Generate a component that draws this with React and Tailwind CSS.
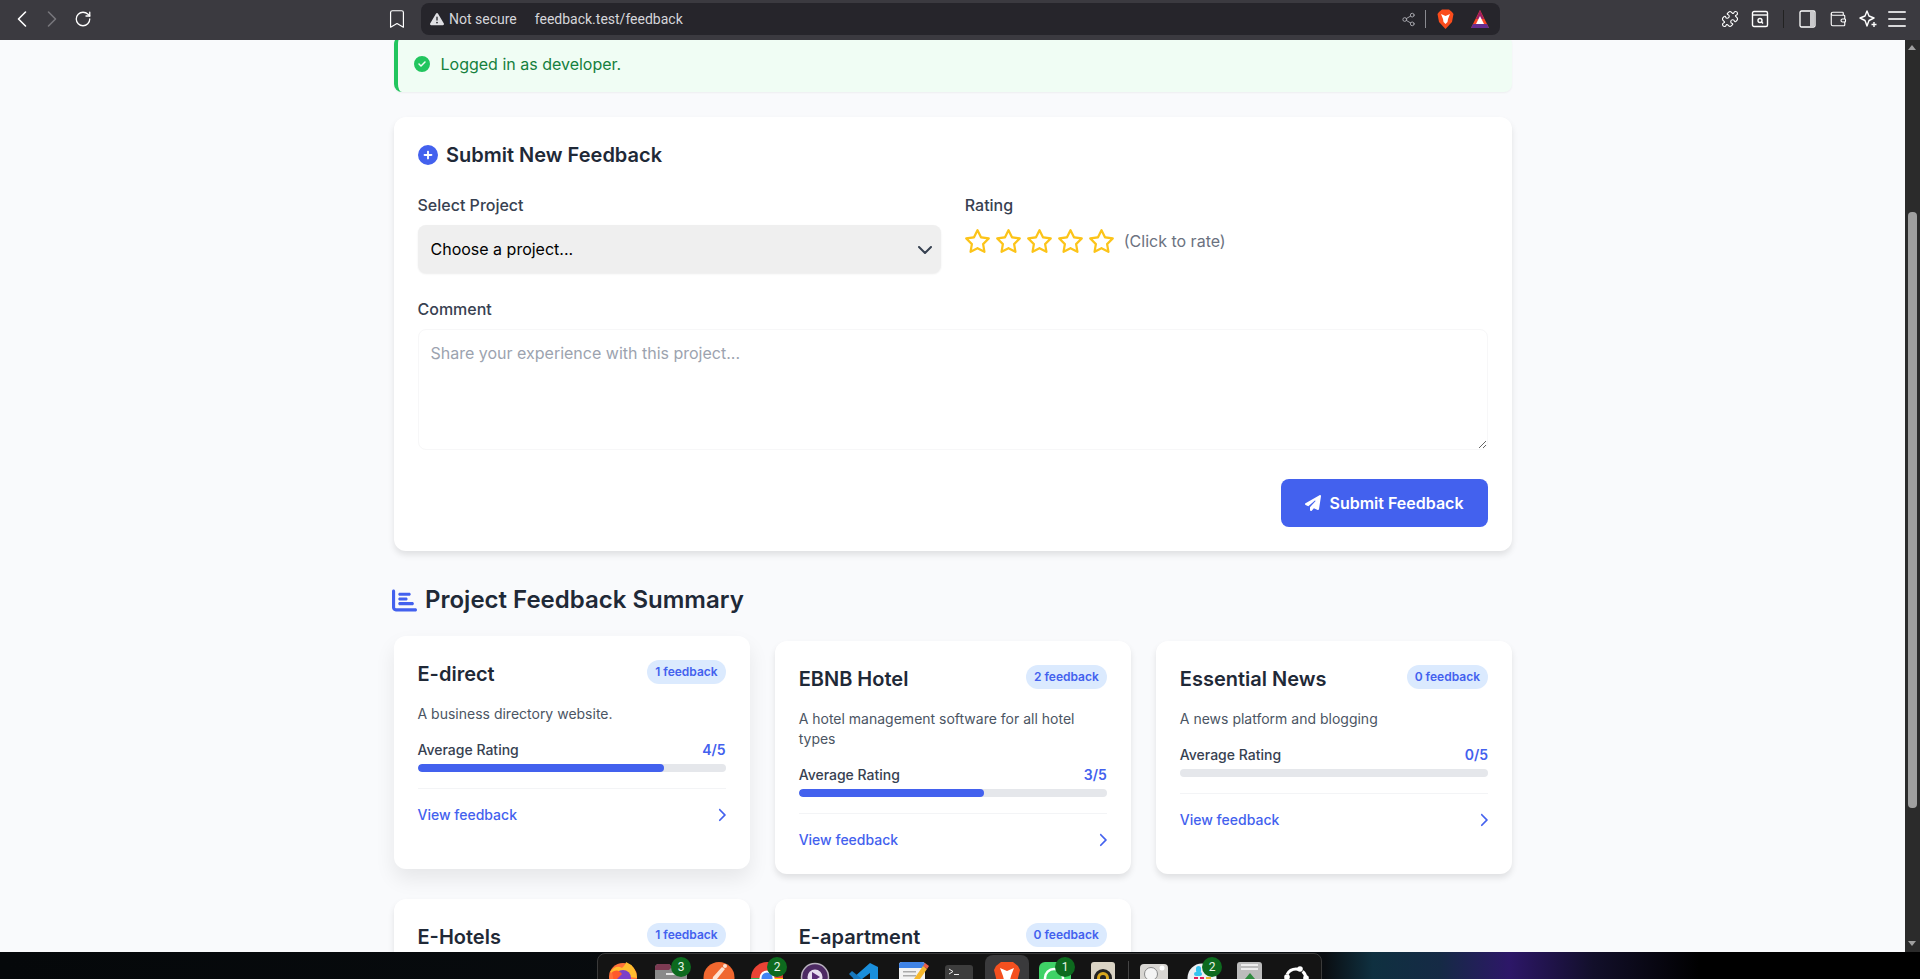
import React from "react";
import { FaChartBar, FaRegStar, FaPaperPlane, FaChevronRight, FaCircleCheck, FaCirclePlus, FaTriangleExclamation } from "react-icons/fa6";
import { ChevronLeft, ChevronRight, RotateCw, Bookmark, Share2, Puzzle, Wallet, Menu } from "lucide-react";

function CardHead({ title, count }) {
  return (
    <div className="flex items-start justify-between mb-4">
      <h3 className="text-xl leading-7 font-semibold text-[#1f2937]">{title}</h3>
      <span className="h-6 rounded-full bg-[#dbeafe] text-[#4361ee] text-xs leading-6 font-semibold px-2">{count} feedback</span>
    </div>
  );
}

function Card({ title, count, desc, rating, pct, hovered }) {
  return (
    <div className={hovered ? "bg-white rounded-xl p-6 flex flex-col -translate-y-[5px] shadow-[0_10px_20px_rgba(0,0,0,0.08)]" : "bg-white rounded-xl p-6 flex flex-col shadow-[0_4px_6px_rgba(0,0,0,0.1)]"}>
      <CardHead title={title} count={count} />
      <p className="text-sm leading-5 text-[#4b5563] mb-4">{desc}</p>
      <div className="flex justify-between text-sm leading-5 mb-1">
        <span className="text-[#374151] font-medium">Average Rating</span>
        <span className="text-[#4361ee] font-semibold">{rating}/5</span>
      </div>
      <div className="h-2 rounded-full bg-[#e5e7eb] overflow-hidden">
        <div className="h-full rounded-full bg-[#4361ee]" style={{ width: pct + "%" }} />
      </div>
      <div className="mt-4 pt-4 border-t border-[#f3f4f6] flex items-center justify-between text-[#4361ee]">
        <span className="text-sm leading-5 font-medium">View feedback</span>
        <FaChevronRight className="w-[9px] h-[14px]" />
      </div>
    </div>
  );
}

function ClippedCard({ title, count }) {
  return (
    <div className="bg-white rounded-xl p-6 h-[120px] shadow-[0_4px_6px_rgba(0,0,0,0.1)]">
      <CardHead title={title} count={count} />
    </div>
  );
}

function Badge({ n, cls }) {
  return <span className={"absolute top-[5px] w-5 h-5 rounded-full bg-[#0d6a1e] text-[#e8f5e8] text-[12px] leading-5 text-center " + cls}>{n}</span>;
}

function Dock() {
  return (
    <div className="h-[27px] shrink-0 overflow-hidden bg-[linear-gradient(90deg,#05080a_0%,#0a0e12_69%,#0f3040_71.5%,#152a45_75%,#2d1768_78.6%,#120f2a_83%,#000_88.5%)] relative font-['Roboto',sans-serif]">
      <div className="ml-[597px] mt-px w-[725px] h-[40px] bg-[#141414] border border-[#3a3a3a] rounded-lg" />
      <svg className="absolute left-0 top-0" width="1920" height="27" viewBox="0 0 1920 27">
        <rect x="985" y="3" width="44" height="40" rx="8" fill="#3a3a3c" />
        <rect x="1128" y="9" width="1" height="20" fill="#444" />
        {/* firefox */}
        <circle cx="623" cy="25" r="14" fill="#ff7139" />
        <path d="M610 20 Q616 12 622 16 Q626 12 626 10 Q636 14 637 26 L622 24 Z" fill="#ffbd2e" />
        <circle cx="623" cy="26" r="8" fill="#7b3fc9" />
        <path d="M612 20 Q618 16 622 22 L614 30 Z" fill="#ff5a2c" />
        {/* files */}
        <path d="M655 16 Q655 12 659 12 L669 12 L672 15 L684 15 Q687 15 687 18 L687 32 L655 32 Z" fill="#8a8a8a" />
        <path d="M655 16 Q655 12 659 12 L669 12 L672 15 L669 18 L655 18 Z" fill="#7c3a52" />
        <rect x="666" y="21" width="11" height="2" fill="#e4e4e4" />
        {/* orange */}
        <circle cx="719" cy="25.5" r="15.5" fill="#f0672f" />
        <path d="M713 25 L722 15 L725 17 L717 27 L712 30 Z" fill="#fde2d2" />
        <circle cx="725" cy="14" r="2" fill="#fde2d2" />
        {/* chrome */}
        <circle cx="767" cy="26" r="16" fill="#ea4335" />
        <path d="M751 26 A16 16 0 0 0 759 40 L767 26 Z" fill="#34a853" />
        <path d="M767 26 L783 26 A16 16 0 0 1 775 40 Z" fill="#fbbc05" />
        <circle cx="767" cy="26" r="7.5" fill="#fff" />
        <circle cx="767" cy="26" r="5.5" fill="#4285f4" />
        {/* player */}
        <circle cx="815" cy="25" r="13.5" fill="#4d2a63" stroke="#b7b0bd" strokeWidth="1.5" />
        <circle cx="815" cy="25" r="7.5" fill="#e8dff0" />
        <path d="M812 20 L820 25 L812 30 Z" fill="#5b2d78" />
        {/* vscode */}
        <path d="M870 11 L878 15 L878 40 L870 44 L870 21 L858 30 L853 26 Z" fill="#1a8fdc" />
        <path d="M849 22 L852 19 L862 27 L858 31 Z" fill="#1778bd" />
        {/* notes */}
        <rect x="899" y="10" width="26" height="24" rx="3" fill="#f2f2f2" />
        <path d="M899 16 V13 Q899 10 902 10 L922 10 Q925 10 925 13 V16 Z" fill="#3f83e6" />
        <rect x="903" y="19" width="13" height="1.5" fill="#aaa" />
        <rect x="903" y="23" width="13" height="1.5" fill="#aaa" />
        <rect x="903" y="27" width="10" height="1.5" fill="#aaa" />
        <path d="M914 27 L923 14 L927 17 L918 30 Z" fill="#f5b82e" />
        <path d="M923 14 L925 11 L929 14 L927 17 Z" fill="#e8604c" />
        {/* terminal */}
        <rect x="945" y="13" width="28" height="20" rx="3" fill="#3d3d3d" />
        <path d="M949 17 L953 19.5 L949 22" stroke="#eee" strokeWidth="1" fill="none" />
        <rect x="954" y="22" width="5" height="1" fill="#eee" />
        {/* brave */}
        <path d="M996 14 L1001 10 L1013 10 L1018 14 L1020 18 L1017 30 L1007 37 L997 30 L994 18 Z" fill="#f4501f" />
        <path d="M1000 16 L1007 19 L1014 16 L1011 24 L1010 28 L1007 30 L1004 28 L1003 24 Z" fill="#fff" />
        {/* whatsapp */}
        <rect x="1039" y="10" width="32" height="30" rx="6" fill="#3fd267" />
        <circle cx="1054" cy="26" r="9" fill="none" stroke="#fff" strokeWidth="2.5" />
        {/* speaker */}
        <rect x="1091" y="10" width="24" height="28" rx="3" fill="#d9d3c4" />
        <circle cx="1103" cy="26" r="9" fill="#222" />
        <circle cx="1103" cy="26" r="6" fill="#d8a71e" />
        <circle cx="1103" cy="26" r="3" fill="#222" />
        {/* search */}
        <rect x="1140" y="12" width="28" height="26" rx="4" fill="#d8d6d2" />
        <circle cx="1151" cy="22" r="6.5" fill="#f4f4f4" stroke="#888" />
        <circle cx="1162" cy="16" r="2.5" fill="#fff" />
        {/* slack */}
        <circle cx="1202" cy="26" r="14.5" fill="#eceff2" />
        <rect x="1196" y="14" width="5" height="7" rx="2.5" fill="#36c5f0" />
        <rect x="1194" y="20" width="8" height="4" rx="2" fill="#36c5f0" />
        <rect x="1194" y="25" width="4" height="2" fill="#e01e5a" />
        <rect x="1200" y="25" width="4" height="2" fill="#e01e5a" />
        <rect x="1206" y="25" width="5" height="2" fill="#ecb22e" />
        {/* trash */}
        <rect x="1237" y="10" width="25" height="28" rx="3" fill="#bcbcbc" />
        <rect x="1241" y="12" width="17" height="2" fill="#eee" />
        <rect x="1241" y="16" width="17" height="2" fill="#eee" />
        <path d="M1245 27 L1250 21 L1255 27 Z" fill="#2e8b3f" />
        {/* ubuntu */}
        <circle cx="1296" cy="27" r="10" fill="none" stroke="#fff" strokeWidth="3" strokeDasharray="14 4" />
        <circle cx="1300" cy="17" r="2.8" fill="#fff" />
        <circle cx="1287" cy="25" r="2.8" fill="#fff" />
        <circle cx="1306" cy="26" r="2.8" fill="#fff" />
      </svg>
      <Badge n="3" cls="left-[671px]" />
      <Badge n="2" cls="left-[767px]" />
      <Badge n="1" cls="left-[1055px]" />
      <Badge n="2" cls="left-[1202px]" />
    </div>
  );
}

function ChromeBar() {
  return (
    <div className="h-10 shrink-0 bg-[#3b3a40] flex items-center pb-[2px] pl-2 text-[#e6e6e8]">
      <ChevronLeft className="w-7 h-7 shrink-0 text-white" strokeWidth={1.4} />
      <ChevronRight className="w-7 h-7 shrink-0 ml-[2px] text-[#77767b]" strokeWidth={1.4} />
      <RotateCw className="w-[18px] h-[18px] shrink-0 ml-2 text-white" strokeWidth={1.75} />
      <Bookmark className="w-[22px] h-[22px] shrink-0 ml-[294px] text-white" strokeWidth={1.3} />
      <div className="ml-[13px] w-[1079px] shrink-0 h-8 rounded-lg bg-[#26252b] flex items-center pl-[9px] pr-[11px] font-['Roboto',sans-serif] text-[14px] text-[#d5d5da]">
        <FaTriangleExclamation className="w-[14px] h-[14px] text-[#dfdfe3]" />
        <span className="ml-[5px]">Not secure</span>
        <span className="ml-[18px]">feedback.test/feedback</span>
        <Share2 className="w-[15px] h-[15px] ml-auto text-[#aaaab0]" strokeWidth={1.5} />
        <div className="ml-[9px] w-px h-[18px] bg-[#8a8a90]" />
        <svg className="ml-[11px]" width="17" height="20" viewBox="0 0 17 20">
          <path d="M2 3 L5 0.5 L12 0.5 L15 3 L16.5 5 L15 13 L8.5 20 L2 13 L0.5 5 Z" fill="#fb4c1c" />
          <path d="M4 5 L8.5 7 L13 5 L11 10 L10.5 13 L8.5 15 L6.5 13 L6 10 Z" fill="#fff" />
        </svg>
        <svg className="ml-[17px]" width="18" height="18" viewBox="0 0 18 18">
          <path d="M9 0 L18 18 L0 18 Z" fill="#ff4724" />
          <path d="M9 0 L13 9 L5 9 Z" fill="#9e1f63" />
          <path d="M2 14 L16 14 L18 18 L0 18 Z" fill="#662d91" />
          <path d="M9 6 L13 14 L5 14 Z" fill="#fff" />
        </svg>
      </div>
      <Puzzle className="w-[18px] h-[18px] shrink-0 ml-[221px] text-white" strokeWidth={1.5} />
      <svg className="ml-[12px] shrink-0 text-white" width="18" height="18" viewBox="0 0 18 18" fill="none" stroke="currentColor" strokeWidth="1.4">
        <rect x="1.5" y="1.5" width="15" height="15" rx="1.5" />
        <path d="M1.5 5 H16.5" />
        <circle cx="9" cy="10.5" r="2" />
        <path d="M10.5 12 L12 13.5" />
      </svg>
      <div className="ml-[14px] w-px h-[18px] shrink-0 bg-[#222]" />
      <svg className="ml-[15px] shrink-0" width="17" height="18" viewBox="0 0 17 18">
        <rect x="1" y="1" width="15" height="16" rx="1.5" fill="none" stroke="#fff" strokeWidth="1.3" />
        <rect x="11" y="1.5" width="4.5" height="15" fill="#c9c9cc" />
      </svg>
      <Wallet className="w-[18px] h-[18px] shrink-0 ml-[13px] text-white" strokeWidth={1.5} />
      <svg className="ml-[12px] shrink-0 text-white" width="18" height="18" viewBox="0 0 18 18" fill="none" stroke="currentColor" strokeWidth="1.4">
        <path d="M8 1 L10 6 L15 8 L10 10.5 L8 16 L6 10.5 L1 8 L6 6 Z" strokeLinejoin="round" />
        <path d="M15 12 V17 M12.5 14.5 H17.5" />
      </svg>
      <Menu className="w-6 h-6 shrink-0 ml-[8px] text-[#d8d8da]" strokeWidth={2} />
    </div>
  );
}

function Scrollbar() {
  return (
    <div className="w-[15px] shrink-0 bg-[#2b2b2b] relative">
      <div className="absolute left-[3px] top-[5px] w-0 h-0 border-x-[4.5px] border-x-transparent border-b-[5px] border-b-[#9f9f9f]" />
      <div className="absolute left-[3px] top-[172px] w-[9px] h-[596px] rounded-[4px] bg-[#9f9f9f]" />
      <div className="absolute left-[3px] bottom-[6px] w-0 h-0 border-x-[4.5px] border-x-transparent border-t-[5px] border-t-[#9f9f9f]" />
    </div>
  );
}

export default function App() {
  return (
    <div className="h-[979px] w-[1920px] overflow-hidden flex flex-col font-['Inter',sans-serif]">
      <ChromeBar />
      <div className="flex-1 flex min-h-0">
        <div className="flex-1 min-w-0 overflow-hidden bg-[#f9fafc]">
          <div className="w-[1118.5px] ml-[393.5px] -mt-1">
            <div className="h-[56px] mb-[25px] bg-[#f0fdf4] border-l-4 border-[#22c55e] rounded-lg shadow-[0_1px_2px_rgba(0,0,0,0.05)] flex items-center pl-4 text-[#15803d]">
              <FaCircleCheck className="w-4 h-4 text-[#22c55e]" />
              <span className="ml-[11px] text-base">Logged in as developer.</span>
            </div>

            <div className="bg-white rounded-xl shadow-[0_4px_6px_rgba(0,0,0,0.1)] p-6 mb-[33px]">
              <h2 className="flex items-center text-xl leading-7 font-semibold text-[#1f2937] mb-6">
                <FaCirclePlus className="w-5 h-5 text-[#4361ee] mr-[8.5px]" />
                Submit New Feedback
              </h2>
              <div className="grid grid-cols-2 gap-6 mb-6">
                <div>
                  <label className="block text-base leading-6 font-medium text-[#374151] mb-2">Select Project</label>
                  <div className="relative">
                    <select className="w-full h-12 appearance-none rounded-lg bg-[#efefef] text-black text-base px-[13px] shadow-[0_1px_2px_rgba(0,0,0,0.08)]">
                      <option>Choose a project...</option>
                    </select>
                    <svg className="absolute right-[9px] top-[21px] pointer-events-none" width="14" height="8" viewBox="0 0 14 8" fill="none" stroke="#374151" strokeWidth="2" strokeLinecap="round" strokeLinejoin="round">
                      <path d="M1 1 L7 7 L13 1" />
                    </svg>
                  </div>
                </div>
                <div>
                  <label className="block text-base leading-6 font-medium text-[#374151] mb-2">Rating</label>
                  <div className="flex items-center h-7 pt-1 -ml-px gap-1 text-[#fcc419]">
                    {[0, 1, 2, 3, 4].map((i) => (
                      <FaRegStar key={i} className="w-[27px] h-6" />
                    ))}
                    <span className="ml-[5px] text-base text-[#6b7280]">(Click to rate)</span>
                  </div>
                </div>
              </div>
              <div>
                <label className="block text-base leading-6 font-medium text-[#374151] mb-2">Comment</label>
                <textarea
                  className="block w-full h-[121px] rounded-lg border border-[#f7f7f8] px-3 py-[11px] text-base placeholder:text-[#9ca3af] outline-none"
                  placeholder="Share your experience with this project..."
                />
              </div>
              <div className="flex justify-end mt-[29px]">
                <button className="h-12 w-[207px] rounded-lg bg-[#4361ee] text-white text-base font-semibold flex items-center justify-center gap-2">
                  <FaPaperPlane className="w-4 h-4" />
                  Submit Feedback
                </button>
              </div>
            </div>

            <h2 className="flex items-center text-2xl leading-8 font-semibold text-[#1f2937] mb-[25px] -ml-[1.5px]">
              <FaChartBar className="w-[25px] h-[25px] text-[#4361ee] mr-2" />
              Project Feedback Summary
            </h2>

            <div className="grid grid-cols-3 gap-x-[25px] gap-y-[25px]">
              <Card title="E-direct" count={1} desc="A business directory website." rating={4} pct={80} hovered />
              <Card title="EBNB Hotel" count={2} desc="A hotel management software for all hotel types" rating={3} pct={60} />
              <Card title="Essential News" count={0} desc="A news platform and blogging" rating={0} pct={0} />
              <ClippedCard title="E-Hotels" count={1} />
              <ClippedCard title="E-apartment" count={0} />
            </div>
          </div>
        </div>
        <Scrollbar />
      </div>
      <Dock />
    </div>
  );
}
